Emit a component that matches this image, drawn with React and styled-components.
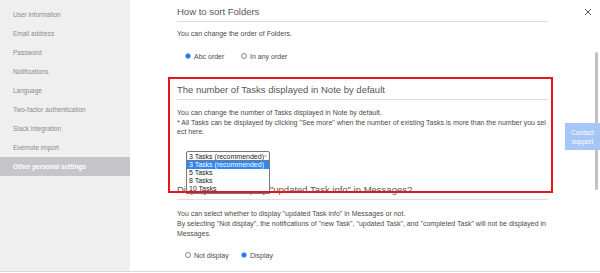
import React from 'react';
import styled, { createGlobalStyle } from 'styled-components';

const Global = createGlobalStyle`
  html, body { margin: 0; padding: 0; background: #fff; }
  body { font-family: "Liberation Sans", Arial, sans-serif; }
  * { box-sizing: border-box; }
`;

const Page = styled.div`
  position: relative;
  display: flex;
  width: 600px;
  height: 272px;
  overflow: hidden;
  border-bottom: 1px solid #d9d9d9;
`;

const Sidebar = styled.nav`
  width: 130px;
  flex: none;
  background: #efefef;
  padding-top: 5px;
  display: flex;
  flex-direction: column;
`;

const NavItem = styled.div`
  height: 19px;
  line-height: 19px;
  padding-left: 13px;
  font-size: 6.5px;
  color: ${p => (p.$active ? '#ffffff' : '#8a8a8a')};
  font-weight: ${p => (p.$active ? 700 : 400)};
  background: ${p => (p.$active ? '#c5c5ca' : 'transparent')};
  white-space: nowrap;
`;

const Main = styled.main`
  position: relative;
  flex: 1;
  padding: 6px 0 0 47px;
`;

const Section = styled.section`
  width: 371px;
  margin-top: ${p => p.$gap || 0}px;
`;

const Heading = styled.h2`
  margin: 0;
  font-size: 9.5px;
  line-height: 12px;
  font-weight: 400;
  color: #555;
  padding-bottom: 3px;
  border-bottom: 1px solid #dcdcdc;
  white-space: nowrap;
`;

const Text = styled.p`
  margin: ${p => p.$top}px 0 0;
  font-size: 7px;
  line-height: ${p => p.$lh}px;
  color: #4a4a4a;
  word-break: ${p => (p.$breakAll ? 'break-all' : 'normal')};
`;

const RadioRow = styled.div`
  display: flex;
  align-items: center;
  height: 10px;
  margin-top: ${p => p.$top}px;
  padding-left: 8px;
`;

const RadioOption = styled.label`
  display: flex;
  align-items: center;
  gap: 3px;
  width: 56px;
  font-size: 7px;
  color: #4a4a4a;
  white-space: nowrap;
`;

const RadioDot = styled.span`
  width: 6px;
  height: 6px;
  border-radius: 50%;
  flex: none;
  border: 1px solid ${p => (p.$checked ? '#8fb4f4' : '#8a8a8a')};
  background: ${p => (p.$checked ? '#1a73e8' : '#fff')};
`;

const SelectWrap = styled.div`
  position: relative;
  margin: 14.5px 0 0 9px;
  width: 84px;
  height: 10px;
`;

const SelectBox = styled.div`
  display: flex;
  align-items: center;
  justify-content: space-between;
  height: 10px;
  padding: 0 2px;
  border: 1px solid #767676;
  border-radius: 2px;
  font-size: 7px;
  color: #222;
  background: #fff;
  white-space: nowrap;
`;

const OptionList = styled.ul`
  position: absolute;
  left: 0;
  top: 8.5px;
  width: 84px;
  margin: 0;
  padding: 0;
  list-style: none;
  background: #fff;
  border: 1px solid #7a7a7a;
  z-index: 2;
`;

const Option = styled.li`
  height: 8px;
  line-height: 8px;
  padding-left: 2px;
  font-size: 7px;
  color: ${p => (p.$selected ? '#fff' : '#222')};
  background: ${p => (p.$selected ? '#2f86f6' : '#fff')};
  white-space: nowrap;
`;

const Highlight = styled.div`
  position: absolute;
  left: 38px;
  top: 77px;
  width: 385px;
  height: 116px;
  border: 2px solid #e5141d;
  pointer-events: none;
  z-index: 3;
`;

const CloseButton = styled.div`
  position: absolute;
  left: 584px;
  top: 8px;
  width: 8px;
  height: 8px;
  display: flex;
`;

const Scrollbar = styled.div`
  position: absolute;
  right: 2px;
  top: 52px;
  width: 3px;
  height: 138px;
  border-radius: 2px;
  background: #c1c1c1;
`;

const Contact = styled.div`
  position: absolute;
  right: 0;
  top: 123px;
  width: 35px;
  height: 27px;
  background: #a7c5f7;
  color: #fff;
  font-size: 6.5px;
  line-height: 9px;
  text-align: center;
  display: flex;
  align-items: center;
  justify-content: center;
  z-index: 4;
`;

const navItems = [
  'User information',
  'Email address',
  'Password',
  'Notifications',
  'Language',
  'Two-factor authentication',
  'Slack integration',
  'Evernote import',
  'Other personal settings',
];

export default function App() {
  return (
    <>
      <Global />
      <Page>
        <Sidebar>
          {navItems.map((n, i) => (
            <NavItem key={n} $active={i === navItems.length - 1}>{n}</NavItem>
          ))}
        </Sidebar>
        <Main>
          <Section>
            <Heading>How to sort Folders</Heading>
            <Text $top={7} $lh={9.5}>You can change the order of Folders.</Text>
            <RadioRow $top={12.5}>
              <RadioOption><RadioDot $checked />Abc order</RadioOption>
              <RadioOption><RadioDot />In any order</RadioOption>
            </RadioRow>
          </Section>

          <Section $gap={23}>
            <Heading>The number of Tasks displayed in Note by default</Heading>
            <Text $top={8} $lh={9.5} $breakAll>
              You can change the number of Tasks displayed in Note by default.
              <br />
              * All Tasks can be displayed by clicking "See more" when the number of existing Tasks is more than the number you select here.
            </Text>
            <SelectWrap>
              <SelectBox>
                3 Tasks (recommended)
                <svg width="5" height="4" viewBox="0 0 5 4">
                  <path d="M0.6 0.8 L2.5 2.8 L4.4 0.8" fill="none" stroke="#333" strokeWidth="0.9" />
                </svg>
              </SelectBox>
              <OptionList>
                <Option $selected>3 Tasks (recommended)</Option>
                <Option>5 Tasks</Option>
                <Option>8 Tasks</Option>
                <Option>10 Tasks</Option>
              </OptionList>
            </SelectWrap>
          </Section>

          <Section $gap={23}>
            <Heading>Display or not display "updated Task info" in Messages?</Heading>
            <Text $top={9} $lh={10}>
              You can select whether to display "updated Task info" in Messages or not.
              <br />
              By selecting "Not display", the notifications of "new Task", "updated Task", and "completed Task" will not be displayed in Messages.
            </Text>
            <RadioRow $top={11}>
              <RadioOption><RadioDot />Not display</RadioOption>
              <RadioOption><RadioDot $checked />Display</RadioOption>
            </RadioRow>
          </Section>

          <Highlight />
        </Main>

        <CloseButton>
          <svg width="8" height="8" viewBox="0 0 8 8">
            <path d="M1 1 L7 7 M7 1 L1 7" stroke="#555" strokeWidth="1" fill="none" />
          </svg>
        </CloseButton>
        <Scrollbar />
        <Contact>Contact<br />support</Contact>
      </Page>
    </>
  );
}
